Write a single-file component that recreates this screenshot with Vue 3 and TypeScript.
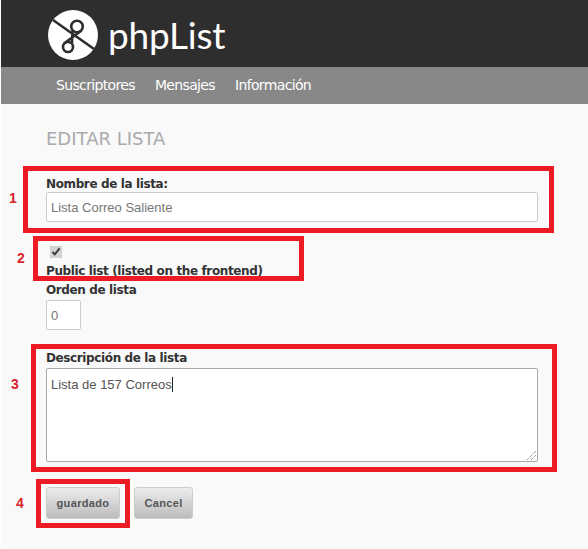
<script setup lang="ts">
const navItems: string[] = ['Suscriptores', 'Mensajes', 'Información']
const notes = [
  { n: '1', cls: 'box1', numCls: 'num1' },
  { n: '2', cls: 'box2', numCls: 'num2' },
  { n: '3', cls: 'box3', numCls: 'num3' },
  { n: '4', cls: 'box4', numCls: 'num4' },
]
</script>

<template>
  <div class="page">
    <header class="top">
      <svg class="logo" width="52" height="52" viewBox="0 0 52 52" aria-hidden="true">
        <circle cx="26" cy="26" r="25" fill="#fff" />
        <path d="M6 11 L47 40" stroke="#2e2e2e" stroke-width="2.6" fill="none" />
        <circle cx="30" cy="17.5" r="5.8" stroke="#2e2e2e" stroke-width="2.6" fill="none" />
        <circle cx="21" cy="38" r="5" stroke="#2e2e2e" stroke-width="2.6" fill="none" />
        <path d="M25.5 21.5 L25 34 M34.5 21.5 L17 34.5" stroke="#2e2e2e" stroke-width="2.6" fill="none" />
      </svg>
      <span class="brand">phpList</span>
    </header>
    <nav class="nav">
      <a v-for="item in navItems" :key="item" class="nav-item">{{ item }}</a>
    </nav>
    <main class="main">
      <h1 class="title">EDITAR LISTA</h1>
      <label class="label first">Nombre de la lista:</label>
      <div class="input wide">Lista Correo Saliente</div>
      <div class="check-row">
        <input type="checkbox" class="check" checked />
      </div>
      <label class="label public">Public list (listed on the frontend)</label>
      <label class="label order">Orden de lista</label>
      <div class="input small">0</div>
      <label class="label desc">Descripción de la lista</label>
      <div class="textarea">
        <span>Lista de 157 Correos</span><i class="caret"></i>
        <svg class="grip" width="9" height="9" viewBox="0 0 9 9" aria-hidden="true">
          <path d="M0 9 L9 0 M4 9 L9 4" stroke="#666" stroke-width="1" stroke-dasharray="1 1" fill="none" />
        </svg>
      </div>
      <div class="actions">
        <button class="btn save" type="button">guardado</button>
        <button class="btn" type="button">Cancel</button>
      </div>
    </main>
    <template v-for="note in notes" :key="note.n">
      <div class="mark" :class="note.cls"></div>
      <span class="num" :class="note.numCls">{{ note.n }}</span>
    </template>
  </div>
</template>

<style>
html, body { margin: 0; background: #f9f9f9; }
</style>

<style scoped>
.page {
  position: relative;
  width: 588px;
  height: 549px;
  overflow: hidden;
  background: #f9f9f9;
  border-left: 1px solid #fff;
  box-sizing: border-box;
  font-family: "Liberation Sans", Arial, sans-serif;
}
.top {
  height: 67px;
  background: #2e2e2e;
  display: flex;
  align-items: center;
  padding-left: 46px;
  box-sizing: border-box;
}
.logo { flex: none; margin-top: 3px; }
.brand {
  margin-left: 9px;
  color: #fff;
  font-family: "Lato", sans-serif;
  font-weight: 400;
  font-size: 37px;
  line-height: 1;
  letter-spacing: -0.2px;
  margin-top: 2px;
}
.nav {
  height: 37px;
  background: #888;
  display: flex;
  align-items: center;
  gap: 20px;
  padding-left: 55px;
  box-sizing: border-box;
}
.nav-item {
  color: #fff;
  font-family: "DejaVu Sans", sans-serif;
  font-size: 14px;
  letter-spacing: -0.65px;
  line-height: 37px;
}
.main { padding: 0 49px 0 45px; }
.title {
  margin: 25px 0 0;
  font-family: "DejaVu Sans", sans-serif;
  font-weight: 400;
  font-size: 18px;
  line-height: 20px;
  color: #aaaaae;
}
.label {
  display: block;
  font-family: "DejaVu Sans", sans-serif;
  font-weight: 700;
  font-size: 12px;
  letter-spacing: -0.38px;
  line-height: 15px;
  color: #333;
}
.first { margin-top: 28px; }
.input {
  box-sizing: border-box;
  height: 30px;
  border: 1px solid #ccc;
  border-radius: 2px;
  background: #fff;
  color: #777;
  font-size: 13px;
  line-height: 29px;
  padding-left: 4px;
}
.wide { width: 492px; }
.small { width: 35px; margin-top: 2px; }
.check-row { height: 23px; margin-top: 18px; display: flex; align-items: center; padding-left: 4px; }
.check { margin: 0; width: 12px; height: 12px; accent-color: #d4d4d4; }
.public { margin-top: 1px; }
.order { margin-top: 4px; }
.desc { margin-top: 21px; }
.textarea {
  position: relative;
  box-sizing: border-box;
  width: 492px;
  height: 94px;
  margin-top: 2px;
  border: 1px solid #aaa;
  border-radius: 2px;
  background: #fff;
  color: #555;
  font-size: 13px;
  line-height: 15px;
  padding: 8px 4px;
}
.caret {
  display: inline-block;
  width: 1px;
  height: 15px;
  background: #222;
  vertical-align: top;
}
.grip { position: absolute; right: 1px; bottom: 1px; }
.actions { display: flex; gap: 14px; margin-top: 25px; }
.btn {
  box-sizing: border-box;
  height: 32px;
  width: 59px;
  padding: 0;
  border: 1px solid #ccc;
  border-radius: 3px;
  background: linear-gradient(#ececec, #bcbcbc);
  color: #555;
  font-family: "Liberation Sans", Arial, sans-serif;
  font-size: 11px;
  font-weight: 700;
  letter-spacing: 0.35px;
}
.save { width: 74px; }
.mark {
  position: absolute;
  box-sizing: border-box;
  border: 5px solid #ed1c24;
}
.box1 { left: 22px; top: 166px; width: 531px; height: 67px; }
.box2 { left: 32px; top: 236px; width: 271px; height: 45px; }
.box3 { left: 30px; top: 344px; width: 526px; height: 128px; }
.box4 { left: 35px; top: 479px; width: 94px; height: 49px; }
.num {
  position: absolute;
  color: #d8232a;
  font-family: "Liberation Sans", Arial, sans-serif;
  font-size: 14px;
  font-weight: 700;
  line-height: 16px;
}
.num1 { left: 8px; top: 190px; }
.num2 { left: 16px; top: 250px; }
.num3 { left: 10px; top: 376px; }
.num4 { left: 15px; top: 495px; }
</style>
